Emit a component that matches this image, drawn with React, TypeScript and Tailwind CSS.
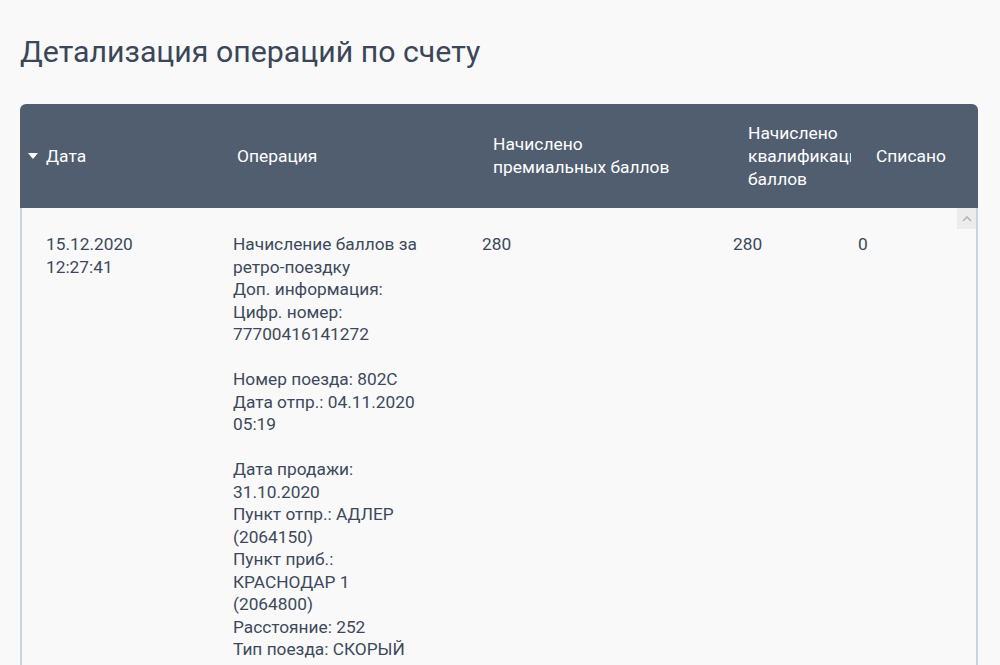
import React from 'react';

const operationLines: string[] = [
  'Начисление баллов за ретро-поездку',
  'Доп. информация:',
  'Цифр. номер: 77700416141272',
  '',
  'Номер поезда: 802С',
  'Дата отпр.: 04.11.2020 05:19',
  '',
  'Дата продажи: 31.10.2020',
  'Пункт отпр.: АДЛЕР (2064150)',
  'Пункт приб.: КРАСНОДАР 1 (2064800)',
  'Расстояние: 252',
  'Тип поезда: СКОРЫЙ',
  'Класс обслуживания: 2Й',
  'Номер вагона: 3',
];

export default function App() {
  return (
    <div className="h-[665px] overflow-hidden bg-[#f9f9f9] px-5 pt-[33px] font-['Roboto','Liberation_Sans',sans-serif]">
      <h1 className="text-[30.3px] leading-[38px] text-[#3b4658]">Детализация операций по счету</h1>

      <div className="mt-[33px] w-[958px]">
        {/* Header */}
        <div className="flex h-[104px] items-center rounded-t-[6px] bg-[#505e70] text-[17.4px] leading-[23px] text-white">
          <div className="flex w-[217px] items-center pl-2">
            <svg width="10" height="6" viewBox="0 0 10 6" className="mr-[8px]">
              <path d="M0 0 L10 0 L5 6 Z" fill="#ffffff" />
            </svg>
            <span>Дата</span>
          </div>
          <div className="w-[256px]">Операция</div>
          <div className="w-[255px]">
            Начислено
            <br />
            премиальных баллов
          </div>
          <div className="mr-[25px] w-[103px] overflow-hidden whitespace-nowrap">
            Начислено
            <br />
            квалификационных
            <br />
            баллов
          </div>
          <div>Списано</div>
        </div>

        {/* Body */}
        <div className="flex h-[460px] border-l-2 border-[#c9d4df] text-[17.3px] leading-[22.5px] text-[#3d495b]">
          <div className="flex flex-1 pt-[25px] pl-[24px]">
            <div className="w-[187px]">
              15.12.2020
              <br />
              12:27:41
            </div>
            <div className="w-[249px]">
              <div className="w-[194px]">
                {operationLines.map((line, i) =>
                  line === '' ? <div key={i} className="h-[22.5px]" /> : <div key={i}>{line}</div>
                )}
              </div>
            </div>
            <div className="w-[251px]">280</div>
            <div className="w-[125px]">280</div>
            <div>0</div>
          </div>
          <div className="flex w-[21px] flex-col border-r-2 border-[#c9d4df]">
            <div className="flex h-[21px] items-center justify-center bg-[#ececec]">
              <svg width="10" height="6" viewBox="0 0 10 6">
                <path d="M1 5 L5 1 L9 5" fill="none" stroke="#b5b5b5" strokeWidth="1.6" />
              </svg>
            </div>
          </div>
        </div>
      </div>
    </div>
  );
}
